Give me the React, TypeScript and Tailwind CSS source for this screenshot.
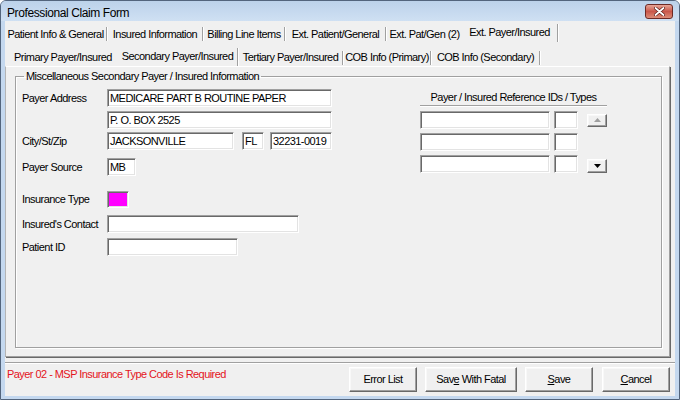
import React from 'react';

const sunken =
  'border border-t-[#a0a0a0] border-l-[#a0a0a0] border-b-white border-r-white shadow-[inset_1px_1px_0_#696969,inset_-1px_-1px_0_#e3e3e3]';

const raised =
  'bg-[#f0f0f0] border border-t-white border-l-white border-b-[#696969] border-r-[#696969] shadow-[inset_-1px_-1px_0_#a0a0a0,inset_1px_1px_0_#f8f8f8]';

type TabDef = { label: string; w: string; sep: boolean; selected?: boolean };

const outerTabs: TabDef[] = [
  { label: 'Patient Info & General', w: 'w-[101px]', sep: true },
  { label: 'Insured Information', w: 'w-[94px]', sep: true },
  { label: 'Billing Line Items', w: 'w-[80px]', sep: true },
  { label: 'Ext. Patient/General', w: 'w-[99px]', sep: true },
  { label: 'Ext. Pat/Gen (2)', w: 'w-[75px]', sep: false },
  { label: 'Ext. Payer/Insured', w: 'w-[95px]', sep: true, selected: true },
];

const innerTabs: TabDef[] = [
  { label: 'Primary Payer/Insured', w: 'w-[110px]', sep: false },
  { label: 'Secondary Payer/Insured', w: 'w-[119px]', sep: true, selected: true },
  { label: 'Tertiary Payer/Insured', w: 'w-[103px]', sep: true },
  { label: 'COB Info (Primary)', w: 'w-[86px]', sep: true },
  { label: 'COB Info (Secondary)', w: 'w-[107px]', sep: true },
];

function TabRow({ tabs }: { tabs: TabDef[] }) {
  return (
    <>
      {tabs.map((t) => (
        <React.Fragment key={t.label}>
          <div className={`${t.w} h-full flex items-center justify-center whitespace-nowrap`}>
            <span className={t.selected ? '-mt-[3px]' : ''}>{t.label}</span>
          </div>
          {t.sep && (
            <div
              className={`w-[2px] border-l border-l-[#a0a0a0] border-r border-r-white ${
                t.selected ? 'h-[18px] -mt-[2px]' : 'h-[14px]'
              }`}
            />
          )}
        </React.Fragment>
      ))}
    </>
  );
}

function Field({ w, value = '', h = 'h-[18px]', bg = 'bg-white' }: { w: string; value?: string; h?: string; bg?: string }) {
  return (
    <div className={`${w} ${h} ${bg} ${sunken} flex items-center pl-[2px] whitespace-nowrap overflow-hidden`}>
      {value}
    </div>
  );
}

function Row({ label, mt, children }: { label?: string; mt: string; children: React.ReactNode }) {
  return (
    <div className={`flex items-center ${mt}`}>
      <div className="w-[85px] shrink-0">{label}</div>
      <div className="flex items-center">{children}</div>
    </div>
  );
}

function Button({ w, children }: { w: string; children: React.ReactNode }) {
  return <div className={`${w} h-[25px] ${raised} flex items-center justify-center`}>{children}</div>;
}

export default function App() {
  return (
    <div className="w-[680px] h-[400px] flex flex-col overflow-hidden rounded-t-[6px] border border-[#53657d] bg-[#c4d8ef] font-['Liberation_Sans',Arial,sans-serif] text-[11px] leading-[13px] tracking-[-0.55px] text-black">
      {/* title bar */}
      <div className="h-[20px] shrink-0 flex items-start bg-gradient-to-b from-[#bcd2ea] to-[#cfe0f3] px-[6px]">
        <span className="mt-[5px] text-[12px] leading-[14px] tracking-[-0.4px]">Professional Claim Form</span>
        <div className="ml-auto mt-[3px] w-[28px] h-[15px] rounded-[3px] border border-[#6d2a25] bg-gradient-to-b from-[#e6a597] via-[#c9574a] to-[#dc8c78] flex items-center justify-center">
          <svg width="11" height="9" viewBox="0 0 11 9">
            <path d="M1.5 1 L9.5 8 M9.5 1 L1.5 8" stroke="#5a1a14" strokeWidth="3.2" strokeLinecap="round" />
            <path d="M1.5 1 L9.5 8 M9.5 1 L1.5 8" stroke="#fff" strokeWidth="1.8" strokeLinecap="round" />
          </svg>
        </div>
      </div>

      {/* client area */}
      <div className="flex-1 mx-[4px] mb-[3px] bg-[#f0f0f0] flex flex-col">
        <div className="mt-[3px] h-[20px] flex items-center">
          <TabRow tabs={outerTabs} />
        </div>
        <div className="mt-[5px] h-[17px] flex items-center pl-[3px]">
          <TabRow tabs={innerTabs} />
        </div>

        {/* tab panel */}
        <div className="h-[291px] mr-[5px] border border-l-[#b4b4b4] border-t-white border-r-[#a0a0a0] border-b-[#a0a0a0] shadow-[1px_1px_0_#696969] flex flex-col">
          <fieldset className="mt-[3px] ml-[9px] w-[647px] h-[278px] border border-[#a0a0a0] shadow-[inset_1px_1px_0_#fff,1px_1px_0_#fff]">
            <legend className="ml-[8px] px-[2px]">Miscellaneous Secondary Payer / Insured Information</legend>
            <div className="mt-[6px] pl-[6px] flex">
              {/* left column */}
              <div className="w-[398px] flex flex-col">
                <Row label="Payer Address" mt="mt-0">
                  <Field w="w-[225px]" value="MEDICARE PART B ROUTINE PAPER" />
                </Row>
                <Row mt="mt-[4px]">
                  <Field w="w-[225px]" value="P. O. BOX 2525" />
                </Row>
                <Row label="City/St/Zip" mt="mt-[3px]">
                  <Field w="w-[127px]" value="JACKSONVILLE" />
                  <div className="ml-[8px]">
                    <Field w="w-[22px]" value="FL" />
                  </div>
                  <div className="ml-[6px]">
                    <Field w="w-[62px]" value="32231-0019" />
                  </div>
                </Row>
                <Row label="Payer Source" mt="mt-[8px]">
                  <Field w="w-[29px]" value="MB" />
                </Row>
                <Row label="Insurance Type" mt="mt-[15px]">
                  <Field w="w-[22px]" h="h-[17px]" bg="bg-[#ff00ff]" />
                </Row>
                <Row label="Insured's Contact" mt="mt-[7px]">
                  <Field w="w-[192px]" />
                </Row>
                <Row label="Patient ID" mt="mt-[5px]">
                  <Field w="w-[131px]" />
                </Row>
              </div>

              {/* right column */}
              <div className="w-[187px] flex flex-col">
                <div className="h-[17px] flex items-center justify-center border-b border-b-[#a0a0a0] shadow-[0_1px_0_#fff]">
                  Payer / Insured Reference IDs / Types
                </div>
                <div className="mt-[5px] flex items-center">
                  <Field w="w-[130px]" />
                  <div className="ml-[4px]">
                    <Field w="w-[24px]" />
                  </div>
                  <div className={`ml-[9px] w-[20px] h-[13px] ${raised} flex items-center justify-center`}>
                    <svg width="7" height="4" viewBox="0 0 7 4">
                      <path d="M0 4 L3.5 0 L7 4 Z" fill="#a0a0a0" />
                    </svg>
                  </div>
                </div>
                <div className="mt-[4px] flex items-center">
                  <Field w="w-[130px]" />
                  <div className="ml-[4px]">
                    <Field w="w-[24px]" />
                  </div>
                </div>
                <div className="mt-[4px] flex items-end">
                  <Field w="w-[130px]" />
                  <div className="ml-[4px]">
                    <Field w="w-[24px]" />
                  </div>
                  <div className={`ml-[9px] w-[20px] h-[14px] ${raised} flex items-center justify-center`}>
                    <svg width="7" height="4" viewBox="0 0 7 4">
                      <path d="M0 0 L7 0 L3.5 4 Z" fill="#000" />
                    </svg>
                  </div>
                </div>
              </div>
            </div>
          </fieldset>
        </div>

        {/* separator */}
        <div className="mt-[5px] h-[2px] border-t border-t-[#a0a0a0] border-b border-b-white" />

        {/* bottom bar */}
        <div className="mt-[3px] flex items-start">
          <div className="pl-[2px] pt-[1px] text-[#e4141c]">Payer 02 - MSP Insurance Type Code Is Required</div>
          <div className="ml-auto mr-[5px] flex gap-[8px]">
            <Button w="w-[68px]">Error List</Button>
            <Button w="w-[92px]">
              <span>
                Sav<u>e</u> With Fatal
              </span>
            </Button>
            <div className="flex gap-[9px]">
              <Button w="w-[68px]">
                <span>
                  <u>S</u>ave
                </span>
              </Button>
              <Button w="w-[68px]">
                <span>
                  <u>C</u>ancel
                </span>
              </Button>
            </div>
          </div>
        </div>
      </div>
    </div>
  );
}
